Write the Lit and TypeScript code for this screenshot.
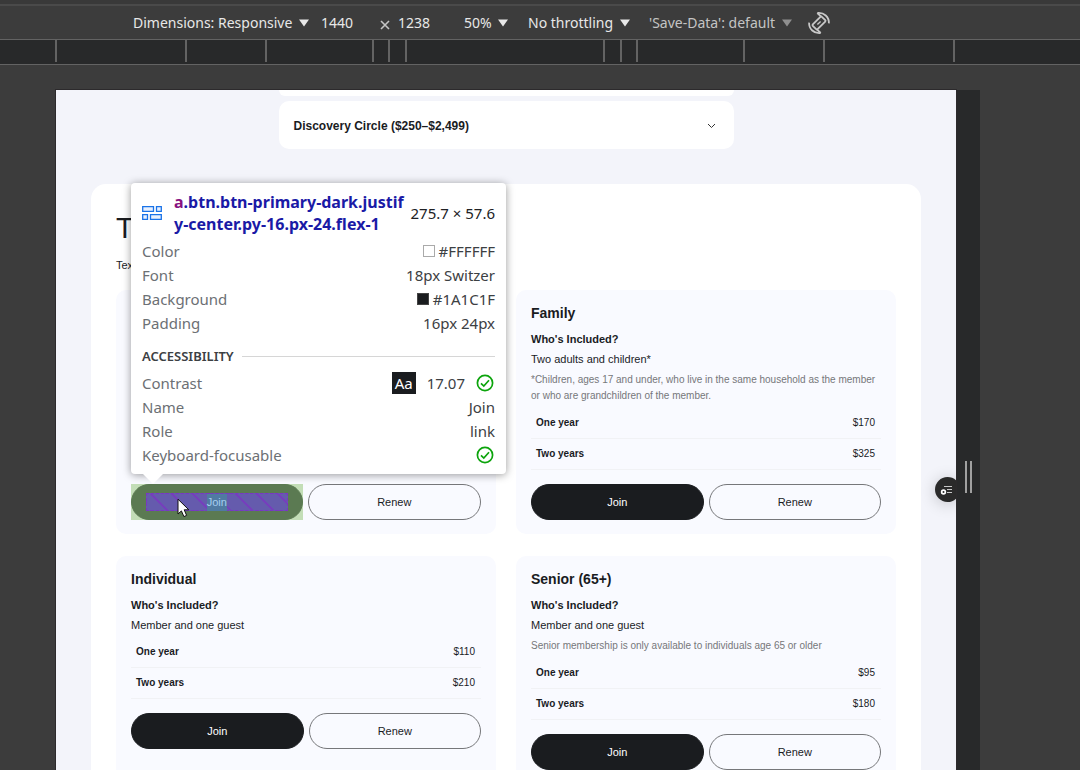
import { LitElement, html, css, nothing } from "lit";
import { customElement, property } from "lit/decorators.js";

interface Plan {
  name: string;
  guests: string;
  note: string;
  rates: [string, string][];
}

const FAMILY: Plan = {
  name: "Family",
  guests: "Two adults and children*",
  note: "*Children, ages 17 and under, who live in the same household as the member or who are grandchildren of the member.",
  rates: [["One year", "$170"], ["Two years", "$325"]],
};
const INDIVIDUAL: Plan = {
  name: "Individual",
  guests: "Member and one guest",
  note: "",
  rates: [["One year", "$110"], ["Two years", "$210"]],
};
const SENIOR: Plan = {
  name: "Senior (65+)",
  guests: "Member and one guest",
  note: "Senior membership is only available to individuals age 65 or older",
  rates: [["One year", "$95"], ["Two years", "$180"]],
};

/* Distances between neighbouring breakpoint marks on the ruler. */
const BREAKPOINTS = [130, 80, 107, 16, 17, 198, 17, 16, 107, 80, 130, 127];

const triangle = html`<svg class="tri" width="10" height="8" viewBox="0 0 10 8" aria-hidden="true">
  <path d="M0 0.5H10L5 7.5Z" fill="currentColor" />
</svg>`;

const check = html`<svg class="check" width="18" height="18" viewBox="0 0 18 18" fill="none" stroke="#0ca40c" role="img" aria-label="Pass">
  <circle cx="9" cy="9" r="7.6" stroke-width="1.7" />
  <path d="M5 9.3L7.8 12L13 6.3" stroke-width="1.7" />
</svg>`;

@customElement("device-toolbar")
class DeviceToolbar extends LitElement {
  static styles = css`
    :host { display: block; font-family: "Noto Sans", sans-serif; font-size: 14px; color: #e8e8e8; }
    .strip { height: 6px; box-sizing: border-box; border-top: 4px solid #393939; background: #4a4a4a; }
    .bar { display: flex; align-items: center; height: 33px; padding-left: 133px; background: #3c3c3c; white-space: nowrap; }
    .pick { display: flex; align-items: center; gap: 6px; }
    .pick.dim { color: #c4c4c4; }
    .pick.dim .tri { color: #8f8f8f; }
    select, input { appearance: none; border: 0; margin: 0; padding: 0; background: transparent; color: inherit; font: inherit; line-height: 20px; outline: 0; }
    input { width: 49px; }
    .size { display: flex; align-items: center; margin: 0 16px 0 12px; }
    .times { margin: 4px 8px 0 10px; display: block; }
    .size .h { width: 50px; }
    .zoom { margin-right: 20px; }
    .net { margin-right: 19px; }
    .rotate { border: 0; padding: 0; margin-left: 15px; background: transparent; color: #c8c8c8; display: flex; }
    .ruler { display: flex; height: 24px; padding-left: 55px; border-top: 1px solid #636363; border-bottom: 1px solid #636363; background: #28292a; }
    .mark { height: 22px; box-shadow: inset 2px 0 0 #636363; }
  `;

  render() {
    return html`
      <div class="strip"></div>
      <div class="bar">
        <span class="pick">
          <select aria-label="Device"><option>Dimensions: Responsive</option></select>${triangle}
        </span>
        <span class="size">
          <input aria-label="Width" value="1440" />
          <svg class="times" width="10" height="10" viewBox="0 0 10 10" stroke="#c4c4c4" stroke-width="1.6" aria-hidden="true"><path d="M1 1L9 9M9 1L1 9" /></svg>
          <input class="h" aria-label="Height" value="1238" />
        </span>
        <span class="pick zoom"><select aria-label="Zoom"><option>50%</option></select>${triangle}</span>
        <span class="pick net"><select aria-label="Throttling"><option>No throttling</option></select>${triangle}</span>
        <span class="pick dim"><select aria-label="Save-Data"><option>'Save-Data': default</option></select>${triangle}</span>
        <button class="rotate" aria-label="Rotate">
          <svg width="24" height="24" viewBox="0 0 24 24" fill="none" stroke="currentColor" stroke-width="1.8" aria-hidden="true">
            <rect x="8.6" y="5.6" width="6.8" height="12.8" rx="1" transform="rotate(45 12 12)" />
            <path d="M10.4 13.6L13.6 10.4" stroke-width="1.4" />
            <path d="M10.5 1.9C17 1.2 22.2 6 21.9 12.4M13.5 22.1C7 22.8 1.8 18 2.1 11.6" />
            <path d="M10.3 2L13.9 5.4M13.7 22L10.1 18.6" />
          </svg>
        </button>
      </div>
      <div class="ruler">
        ${BREAKPOINTS.map((n) => html`<div class="mark" style="flex: ${n} 1 0"></div>`)}
      </div>
    `;
  }
}

@customElement("node-tooltip")
class NodeTooltip extends LitElement {
  static styles = css`
    :host { display: block; box-sizing: border-box; width: 375px; padding: 8px 11px 7px; border-radius: 4px; background: #fff; color: #3c4043;
      box-shadow: 0 1px 8px rgba(0, 0, 0, 0.4); font: 15px/24px "Noto Sans", sans-serif; }
    .head { display: flex; align-items: center; margin-bottom: 4px; }
    .icon { flex: none; margin-right: 12px; }
    .sel { flex: 1; font-size: 16px; font-weight: 700; line-height: 22px; color: #1a1aa6; white-space: nowrap; }
    .tag { color: #881280; }
    .dim { white-space: nowrap; color: #202124; }
    .row { display: flex; align-items: center; justify-content: space-between; }
    .key { color: #6c7074; }
    .val { display: flex; align-items: center; }
    .chip { width: 12px; height: 12px; box-sizing: border-box; margin-right: 4px; border: 1px solid #aaa; background: #fff; }
    .chip.dark { background: #1a1c1f; border-color: #444; }
    .sect { display: flex; align-items: center; gap: 8px; margin: 9px 0 3px; font-size: 13px; line-height: 24px; font-weight: 600; color: #3c4043; }
    .rule { flex: 1; height: 1px; background: #d6d6d6; }
    .aa { margin-right: 11px; padding: 0 3px; line-height: 22px; background: #1a1c1f; color: #fff; }
    .check { margin-left: 11px; margin-right: 1px; }
    .tip { position: absolute; left: 12px; top: 100%; display: block; }
  `;

  render() {
    return html`
      <div class="head">
        <svg class="icon" width="20" height="14" viewBox="0 0 20 14" fill="#e8f0fe" stroke="#1a73e8" stroke-width="1.3" aria-hidden="true">
          <path d="M0.7 0.7H11.5V5.3H0.7ZM14.5 0.7H19.3V5.3H14.5ZM0.7 8.7H5.5V13.3H0.7ZM8.5 8.7H19.3V13.3H8.5Z" />
        </svg>
        <div class="sel"><span class="tag">a</span>.btn.btn-primary-dark.justif<wbr>y-center.py-16.px-24.flex-1</div>
        <div class="dim">275.7 × 57.6</div>
      </div>
      <div class="row"><span class="key">Color</span><span class="val"><span class="chip"></span>#FFFFFF</span></div>
      <div class="row"><span class="key">Font</span><span class="val">18px Switzer</span></div>
      <div class="row"><span class="key">Background</span><span class="val"><span class="chip dark"></span>#1A1C1F</span></div>
      <div class="row"><span class="key">Padding</span><span class="val">16px 24px</span></div>
      <div class="sect">ACCESSIBILITY<span class="rule"></span></div>
      <div class="row"><span class="key">Contrast</span><span class="val"><span class="aa">Aa</span>17.07${check}</span></div>
      <div class="row"><span class="key">Name</span><span class="val">Join</span></div>
      <div class="row"><span class="key">Role</span><span class="val">link</span></div>
      <div class="row"><span class="key">Keyboard-focusable</span><span class="val">${check}</span></div>
      <svg class="tip" width="20" height="10" viewBox="0 0 20 10" aria-hidden="true"><path d="M0 0H20L10 10Z" fill="#fff" /></svg>
    `;
  }
}

@customElement("plan-card")
class PlanCard extends LitElement {
  @property({ attribute: false }) plan?: Plan;
  @property({ type: Boolean }) inspected = false;

  static styles = css`
    :host { display: flex; flex-direction: column; box-sizing: border-box; padding: 13px 15px 14px; border-radius: 10px; background: #f9faff; color: #1a1c1f; font-size: 11px; }
    h3 { margin: 0 0 6px; font-size: 14px; line-height: 20px; font-weight: 600; }
    h4, p { margin: 0; font-size: 11px; line-height: 20px; }
    h4 { font-weight: 600; }
    .note { margin: 3px 0 2px; font-size: 10px; line-height: 16px; color: #76777a; }
    table { width: 100%; margin: 2px 0 14px; border-collapse: collapse; font-size: 10px; line-height: 20px; }
    th, td { height: 30px; padding: 0 6px 0 5px; border-bottom: 1px solid #f1f2f5; }
    th { text-align: left; font-weight: 600; }
    td { text-align: right; }
    .actions { position: relative; display: flex; gap: 5px; }
    .inspected { margin-top: auto; }
    .btn { flex: 1; box-sizing: border-box; height: 36px; border: 1px solid #1a1c1f; border-radius: 18px; font-size: 11px; line-height: 35px; text-align: center; text-decoration: none; color: #1a1c1f; }
    .dark { background: #1a1c1f; color: #fff; }
    .ghost { border-color: #76777a; }
    .frame { flex: 1; background: #c3deb7; }
    .lit { display: block; padding: 8px 14px; border-color: #5b7a52; background: #5b7a52; line-height: 18px; }
    .inner { display: block; height: 18px; color: #a6cdf0; border: 1px dashed #7a35c4; box-sizing: border-box; line-height: 17px;
      background: repeating-linear-gradient(45deg, #655bad 0 13px, #7540bc 13px 15px); }
    .word { display: inline-block; background: #507aa2; }
    .tooltip { position: absolute; z-index: 2; left: 0; bottom: calc(100% + 10px); }
    .cursor { position: absolute; z-index: 3; left: 46px; top: 14px; }
  `;

  render() {
    if (this.inspected) {
      return html`
        <div class="actions inspected">
          <div class="frame"><a class="btn lit" href="#join"><span class="inner"><span class="word">Join</span></span></a></div>
          <a class="btn ghost" href="#renew">Renew</a>
          <node-tooltip class="tooltip"></node-tooltip>
          <svg class="cursor" width="14" height="21" viewBox="0 0 14 21" aria-hidden="true">
            <path d="M1 1.2V16L4.4 12.9L6.9 18.6L9.6 17.4L7.2 11.8H11.8Z" fill="#fff" stroke="#111" stroke-width="1" />
          </svg>
        </div>
      `;
    }
    const p = this.plan;
    if (!p) return nothing;
    return html`
      <h3>${p.name}</h3>
      <h4>Who's Included?</h4>
      <p>${p.guests}</p>
      ${p.note ? html`<p class="note">${p.note}</p>` : nothing}
      <table>
        ${p.rates.map(([term, price]) => html`<tr><th scope="row">${term}</th><td>${price}</td></tr>`)}
      </table>
      <div class="actions">
        <a class="btn dark" href="#join">Join</a>
        <a class="btn ghost" href="#renew">Renew</a>
      </div>
    `;
  }
}

@customElement("app-root")
class AppRoot extends LitElement {
  static styles = css`
    :host { display: flex; flex-direction: column; height: 100vh; overflow: hidden; background: #3c3c3c; }
    .stage { flex: 1; min-height: 0; display: flex; align-items: flex-start; padding: 25px 100px 0 56px; }
    .device { flex: 1; min-width: 0; display: flex; }
    .page { position: relative; box-sizing: border-box; flex: 1; min-width: 0; aspect-ratio: 1440 / 1238; overflow: hidden; background: #f3f4fa;
      font-family: "Liberation Sans", sans-serif; color: #1a1c1f; box-shadow: 0 0 0 1px #2c2a2c; }
    .faq { width: 455px; max-width: 100%; margin: 0 auto; display: grid; gap: 5px; }
    .fold { display: flex; align-items: center; justify-content: space-between; box-sizing: border-box; width: 100%; height: 48px; padding: 1px 18px 0 15px;
      border: 0; border-radius: 10px; background: #fff; font: 600 12px/20px "Liberation Sans", sans-serif; color: #1a1c1f; text-align: left; }
    .fold.end { height: 6px; border-radius: 0 0 10px 10px; }
    .plans { margin: 35px 35px 0; padding: 25px; border-radius: 15px; background: #fff; }
    h2 { margin: 0; font-size: 29px; line-height: 38px; font-weight: 500; }
    .lead { margin: 8px 0 15px; font-size: 11px; line-height: 20px; }
    .grid { display: grid; grid-template-columns: 1fr 1fr; gap: 22px 20px; align-items: stretch; }
    .help { position: absolute; right: -4px; top: 387px; width: 25px; height: 25px; padding: 0; border: 0; border-radius: 50%; background: #2a2a2a; box-shadow: 0 2px 16px rgba(0, 0, 0, 0.2); }
    .help svg { display: block; }
    .grip { align-self: stretch; width: 24px; display: flex; flex: none; justify-content: center; align-items: center; gap: 3px; background: #28292a; }
    .grip i { width: 2px; height: 32px; background: #a0a0a0; }
  `;

  render() {
    return html`
      <device-toolbar></device-toolbar>
      <div class="stage">
        <div class="device">
          <main class="page">
            <div class="faq">
              <div class="fold end"></div>
              <button class="fold">
                Discovery Circle ($250–$2,499)
                <svg width="9" height="6" viewBox="0 0 9 6" fill="none" stroke="#333" stroke-width="1" aria-hidden="true"><path d="M1 1L4.5 4.5L8 1" /></svg>
              </button>
            </div>
            <section class="plans">
              <h2>T</h2>
              <p class="lead">Tex</p>
              <div class="grid">
                <plan-card inspected></plan-card>
                <plan-card .plan=${FAMILY}></plan-card>
                <plan-card .plan=${INDIVIDUAL}></plan-card>
                <plan-card .plan=${SENIOR}></plan-card>
              </div>
            </section>
            <button class="help" aria-label="Accessibility options">
              <svg width="25" height="25" viewBox="0 0 25 25" aria-hidden="true">
                <path d="M9 9.5H17M12 12.5H17M12 15.5H17" stroke="#c8c8c8" stroke-width="1" />
                <circle cx="8.5" cy="15" r="2.7" fill="#fff" /><circle cx="8.5" cy="15" r="1" fill="#2a2a2a" />
              </svg>
            </button>
          </main>
          <div class="grip"><i></i><i></i></div>
        </div>
      </div>
    `;
  }
}
